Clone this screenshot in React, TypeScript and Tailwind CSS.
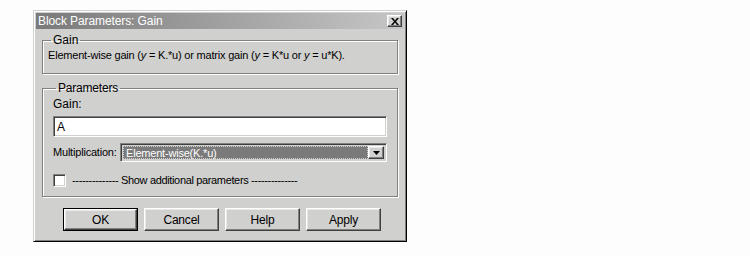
import React from "react";

const raised =
  "border border-t-white border-l-white border-r-[#404040] border-b-[#404040] shadow-[inset_-1px_-1px_0_#808080,inset_1px_1px_0_#e8e8e8]";
const sunken =
  "border border-t-[#808080] border-l-[#808080] border-r-white border-b-white shadow-[inset_1px_1px_0_#404040,inset_-1px_-1px_0_#d0d0d0]";

function Btn({ label, def }: { label: string; def?: boolean }) {
  return (
    <div
      className={`w-[75px] h-[23px] flex items-center justify-center text-[12px] tracking-[-0.2px] text-black ${
        def ? "border border-black" : ""
      }`}
    >
      <div className={`w-full h-full flex items-center justify-center ${raised}`}>{label}</div>
    </div>
  );
}

export default function App() {
  return (
    <div
      className="w-[750px] h-[256px] bg-[#fcfdfc] pl-[33px] pt-[10px]"
      style={{ fontFamily: '"Liberation Sans", Arial, sans-serif' }}
    >
      <div className="w-[374px] h-[232px] bg-[#d0d0cf] border border-t-[#d0d0cf] border-l-[#d0d0cf] border-r-black border-b-black shadow-[inset_1px_1px_0_#fff,inset_-1px_-1px_0_#808080] p-[2px] flex flex-col">
        <div className="h-[16px] flex items-center justify-between pl-[2px] pr-[2px] bg-[linear-gradient(to_right,#7a7a7a,#c6c6c6)]">
          <span className="text-[12px] leading-none text-white tracking-[-0.1px]">Block Parameters: Gain</span>
          <div className={`w-[15px] h-[12px] bg-[#d0d0cf] flex items-center justify-center ${raised}`}>
            <svg width="8" height="7" viewBox="0 0 8 7">
              <path d="M0 0h2l2 2.5L6 0h2L5 3.5 8 7H6L4 4.5 2 7H0l3-3.5z" fill="#000" />
            </svg>
          </div>
        </div>

        <div className="px-[6px] pt-[5px] flex flex-col text-[11px] text-black">
          <fieldset className="border border-[#808080] shadow-[inset_1px_1px_0_#fff,1px_1px_0_#fff] px-[5px] pb-[11px] pt-[3px] m-0 min-w-0">
            <legend className="ml-[3px] px-[2px] text-[12px] leading-[12px]">Gain</legend>
            <div className="text-[11px] leading-[13px] whitespace-nowrap tracking-[-0.2px]">
              Element-wise gain (<i>y</i> = K.*u) or matrix gain (<i>y</i> = K*u or <i>y</i> = u*K).
            </div>
          </fieldset>

          <fieldset className="mt-[8px] border border-[#808080] shadow-[inset_1px_1px_0_#fff,1px_1px_0_#fff] pl-[10px] pr-[10px] pb-[9px] pt-0 m-0 min-w-0">
            <legend className="ml-[3px] px-[2px] text-[12px] leading-[12px] tracking-[-0.2px]">Parameters</legend>
            <div className="text-[12px] leading-[13px] mt-[4px]">Gain:</div>
            <div className={`mt-[5px] h-[21px] bg-white flex items-center pl-[3px] text-[12px] ${sunken}`}>A</div>
            <div className="mt-[6px] flex items-center h-[19px]">
              <span className="text-[11px] tracking-[-0.2px] w-[67px] whitespace-nowrap">Multiplication:</span>
              <div className={`flex-1 h-[19px] flex items-stretch ${sunken} p-[2px]`}>
                <div className="flex-1 bg-[#7a7a7a] text-white text-[11px] tracking-[-0.2px] leading-[13px] pl-[2px] border border-dotted border-[#d0d0cf]">
                  Element-wise(K.*u)
                </div>
                <div className={`w-[16px] bg-[#d0d0cf] flex items-center justify-center ${raised}`}>
                  <svg width="7" height="4" viewBox="0 0 7 4">
                    <path d="M0 0h7L3.5 4z" fill="#000" />
                  </svg>
                </div>
              </div>
            </div>
            <div className="mt-[12px] flex items-center">
              <div className={`w-[13px] h-[13px] bg-white ${sunken}`} />
              <span className="ml-[6px] text-[11px] leading-[13px] whitespace-nowrap tracking-[-0.35px]">
                -------------- Show additional parameters --------------
              </span>
            </div>
          </fieldset>

          <div className="mt-[11px] pl-[21px] flex gap-[6px]">
            <Btn label="OK" def />
            <Btn label="Cancel" />
            <Btn label="Help" />
            <Btn label="Apply" />
          </div>
        </div>
      </div>
    </div>
  );
}
